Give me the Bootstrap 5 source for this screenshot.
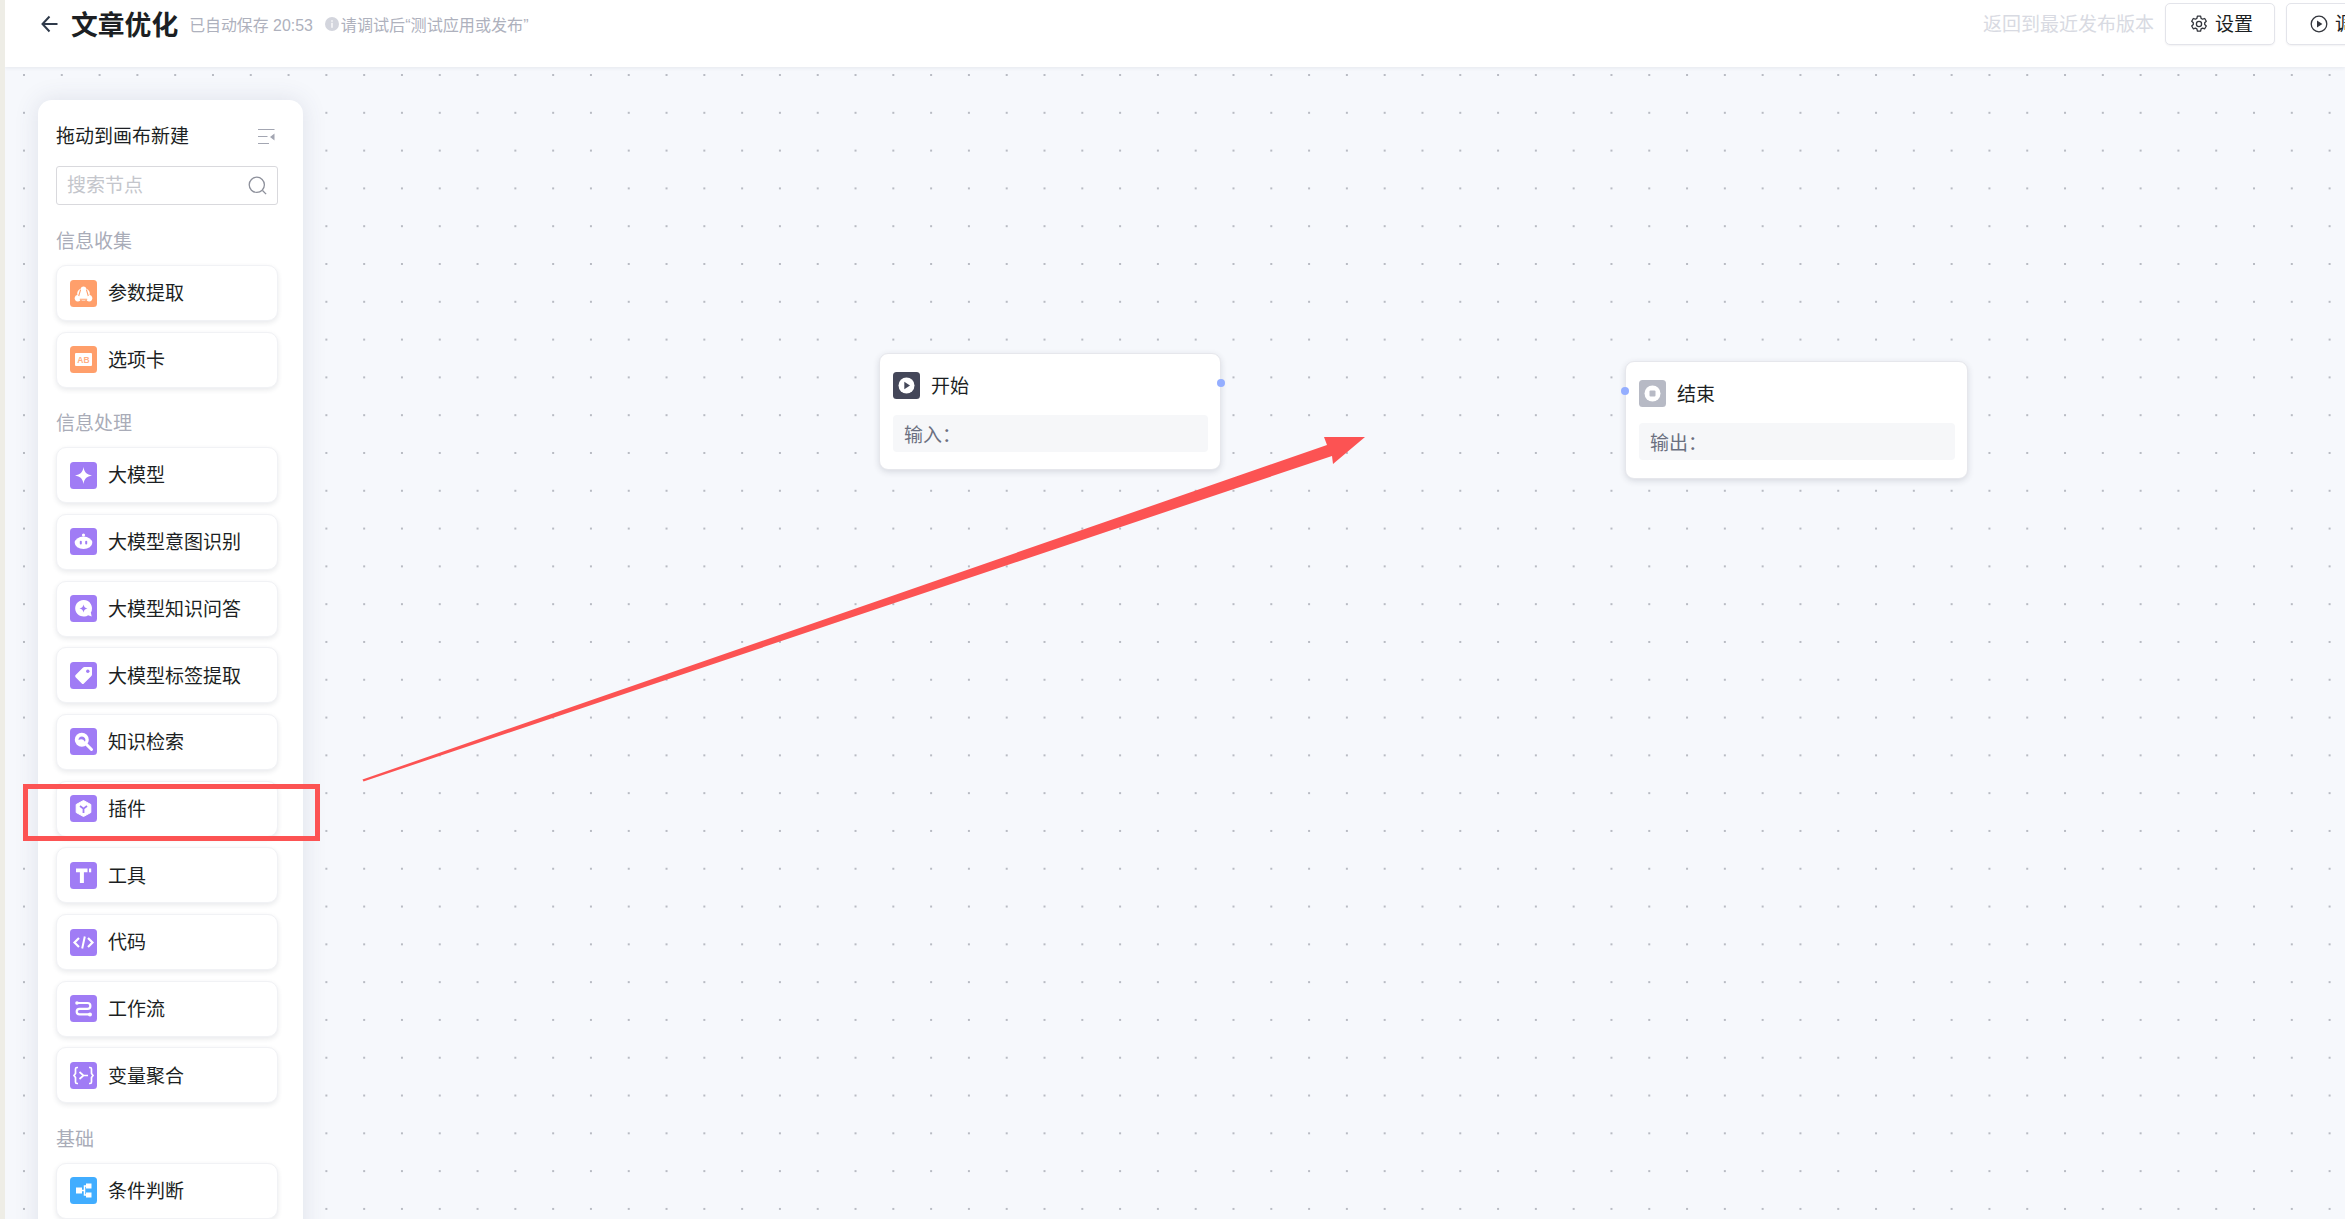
<!DOCTYPE html>
<html lang="zh-CN">
<head>
  <meta charset="UTF-8">
  <meta name="viewport" content="width=device-width, initial-scale=1.0">
  <title>文章优化</title>
  <link href="https://cdn.jsdelivr.net/npm/bootstrap@5.3.0/dist/css/bootstrap.min.css" rel="stylesheet">
  <style>
    html, body { height: 100%; }
    body {
      font-family: "Liberation Sans", "Noto Sans CJK SC", sans-serif;
      font-size: 19px;
      color: #1c1f23;
      overflow: hidden;
      background: #fff;
    }
    .app-shell { height: 1219px; border-left: 5px solid #eeede6; position: relative; overflow: hidden; }
    /* le texte CJK tombe un peu haut : on le recentre */
    .txt-drop { padding-top: 3px; }

    /* barre du haut */
    .top-bar { height: 67px; padding: 3px 0 22px 36px; background: #fff; box-shadow: 0 1px 4px rgba(30, 35, 60, .08); position: relative; z-index: 2; }
    .back-arrow { width: 17px; height: 18px; margin-right: 13px; }
    .page-title { font-size: 26.8px; font-weight: 700; line-height: 42px; margin: 0 11px 0 0; padding-top: 4px; color: #1c1f23; }
    .save-info { font-size: 15.9px; color: #aeb1bd; white-space: nowrap; }
    .test-hint { font-size: 16.1px; color: #aeb1bd; margin-left: 12px; white-space: nowrap; }
    .info-dot { width: 14px; height: 14px; margin-right: 2px; }
    .revert-link { color: #d8dae2; margin-right: 11px; white-space: nowrap; }
    .bar-btn { height: 42px; width: 110px; padding: 0 0 0 24px; font-size: 19px; color: #1c1f23; background: #fff; border: 1px solid #e3e4ea; border-radius: 5px; box-shadow: 0 1px 2px rgba(30, 35, 60, .06); }
    .bar-btn svg { width: 18px; height: 18px; margin-right: 7px; flex-shrink: 0; }
    .run-btn { width: 100px; margin-left: 11px; margin-right: -41px; padding-left: 23px; flex-shrink: 0; }

    /* canevas */
    .flow-canvas {
      height: 1152px;
      padding: 33px 0 0 33px;
      background-color: #f6f8fc;
      background-image: radial-gradient(circle, #b8bbc3 1.1px, transparent 1.3px);
      background-size: 37.8px 37.8px;
      background-position: .1px -10.9px;
      position: relative;
    }

    /* panneau latéral */
    .node-panel {
      width: 265px;
      height: 1200px;
      padding: 22px 25px 0 18px;
      background: #fff;
      border-radius: 14px 14px 0 0;
      box-shadow: 0 0 24px rgba(60, 70, 110, .13);
    }
    .panel-head { height: 28px; margin-bottom: 16px; color: #1c1f23; }
    .panel-toggle { width: 17px; height: 17px; margin-right: 3px; }
    .node-search { height: 39px; border: 1px solid #d9d9dd; border-radius: 3px; padding: 0 10px; margin-bottom: 22px; }
    .node-search input { border: 0; outline: 0; padding: 2px 0 0; width: 170px; font-size: 19px; color: #333; background: transparent; }
    .node-search input::placeholder { color: #c4c6cc; }
    .node-search svg { width: 19px; height: 19px; margin-right: 0; }
    .group-label { color: #a9acb8; height: 28px; line-height: 28px; margin-bottom: 10px; padding-top: 1px; }
    .palette-list { gap: 10.7px; margin-bottom: 21.5px; }
    .palette-item {
      height: 56px;
      padding-left: 13px;
      border: 1px solid #f1f2f5;
      border-radius: 10px;
      background: #fff;
      box-shadow: 0 2px 5px rgba(40, 45, 70, .1);
      color: #1c1f23;
    }
    .palette-item > svg { width: 27px; height: 27px; margin-right: 11px; flex-shrink: 0; }

    /* noeuds */
    .flow-node {
      position: absolute;
      width: 342px;
      height: 117px;
      padding: 18px 12px 0 13px;
      background: #fff;
      border: 1px solid #e6e7ec;
      border-radius: 9px;
      box-shadow: 0 2px 6px rgba(40, 45, 70, .15);
    }
    .node-start { left: 874px; top: 286px; }
    .node-end { left: 1620px; top: 294px; width: 343px; height: 118px; }
    .flow-node > .node-title svg { width: 27px; height: 27px; margin-right: 11px; }
    .node-title { height: 27px; margin-bottom: 16px; }
    .node-field { height: 37px; line-height: 41px; padding-left: 11px; background: #f6f7f9; border-radius: 4px; color: #6b7080; }
    .port-dot { position: absolute; width: 8px; height: 8px; border-radius: 50%; background: #94aeff; top: 25px; }
    .port-right { right: -5px; }
    .port-left { left: -5px; }

    /* annotation rouge */
    .mark-layer { position: absolute; left: -5px; top: 0; width: 2345px; height: 1219px; z-index: 5; pointer-events: none; }
  </style>
</head>
<body>
  <div class="app-shell">
    <!-- Barre du haut -->
    <header class="top-bar d-flex align-items-center">
      <svg class="back-arrow" viewBox="0 0 17 18" fill="none" stroke="#2f3a4a" stroke-width="2"><path d="M8.500 1.500 1.500 9l7 7.500M1.500 9H16.500"/></svg>
      <h1 class="page-title">文章优化</h1>
      <span class="save-info txt-drop">已自动保存 20:53</span>
      <span class="test-hint d-flex align-items-center">
        <svg class="info-dot" viewBox="0 0 13 13"><circle cx="6.500" cy="6.500" r="6.500" fill="#d3d5dd"/><rect x="5.900" y="5.400" width="1.200" height="4.600" fill="#fff"/><rect x="5.900" y="3" width="1.200" height="1.400" fill="#fff"/></svg><span class="txt-drop">请调试后“测试应用或发布”</span>
      </span>
      <span class="revert-link ms-auto txt-drop">返回到最近发布版本</span>
      <button type="button" class="btn bar-btn d-flex align-items-center flex-shrink-0">
        <svg viewBox="0 0 18 18" fill="none" stroke="#33363d" stroke-width="1.300"><path d="M7.400 1.200h3.200l.5 2.200 1.500.8 2.100-.7 1.600 2.800-1.600 1.500v1.700l1.600 1.500-1.600 2.800-2.100-.7-1.500.8-.5 2.200H7.400l-.5-2.200-1.500-.8-2.100.7-1.600-2.800 1.600-1.500V7.800L1.700 6.300l1.600-2.800 2.100.7 1.500-.8z" stroke-linejoin="round"/><circle cx="9" cy="9" r="2.600"/></svg><span class="txt-drop">设置</span>
      </button>
      <button type="button" class="btn bar-btn run-btn d-flex align-items-center">
        <svg viewBox="0 0 18 18"><circle cx="9" cy="9" r="7.800" fill="none" stroke="#33363d" stroke-width="1.300"/><path d="M7 5.500v7l5.400-3.500z" fill="#33363d"/></svg><span class="txt-drop">调试</span>
      </button>
    </header>

    <!-- Canevas -->
    <main class="flow-canvas">
      <aside class="node-panel">
        <div class="panel-head d-flex align-items-center justify-content-between">
          <span class="txt-drop">拖动到画布新建</span>
          <svg class="panel-toggle" viewBox="0 0 17 17" fill="none" stroke="#a3a6b2" stroke-width="1.200"><path d="M0 1.500h16.500M0 8.500h9.500M0 15.500h11"/><path d="M16.500 5.500v7L12 9z" fill="#a3a6b2" stroke="none"/></svg>
        </div>
        <div class="node-search d-flex align-items-center justify-content-between">
          <input type="text" placeholder="搜索节点">
          <svg viewBox="0 0 19 19" fill="none" stroke="#8d909b" stroke-width="1.300"><circle cx="8.800" cy="8.800" r="7.600"/><path d="m14.500 14.500 3.600 3.600"/></svg>
        </div>

        <div class="group-label">信息收集</div>
        <div class="palette-list d-flex flex-column">
          <div class="palette-item d-flex align-items-center">
            <svg viewBox="0 0 27 27"><rect width="27" height="27" rx="3.500" fill="#ff9f6b"/><path d="M13.500 6.500a3 3 0 0 1 2.900 2.300 5.200 5.200 0 0 1 3.200 6.300 3.200 3.200 0 1 1-3.300 4.600 5.400 5.400 0 0 1-5.600 0 3.200 3.200 0 1 1-3.300-4.600 5.200 5.200 0 0 1 3.200-6.300 3 3 0 0 1 2.900-2.300z" fill="#fff"/><path d="M10.600 9.700 8.700 16M16.400 9.700 18.300 16M9.800 19.300h7.400" stroke="#ff9f6b" stroke-width="1.100" fill="none"/></svg><span class="txt-drop">参数提取</span>
          </div>
          <div class="palette-item d-flex align-items-center">
            <svg viewBox="0 0 27 27"><rect width="27" height="27" rx="3.500" fill="#ff9f6b"/><rect x="5" y="7" width="17" height="13" rx="1" fill="#fff"/><text x="13.500" y="16.600" text-anchor="middle" font-family="Liberation Sans" font-weight="700" font-size="8.500" fill="#ffae82">AB</text></svg><span class="txt-drop">选项卡</span>
          </div>
        </div>

        <div class="group-label">信息处理</div>
        <div class="palette-list d-flex flex-column">
          <div class="palette-item d-flex align-items-center">
            <svg viewBox="0 0 27 27"><rect width="27" height="27" rx="3.500" fill="#a07cf5"/><path d="M13.500 5c.9 5.400 3.100 7.600 8.500 8.500-5.400.9-7.600 3.100-8.500 8.500-.9-5.400-3.100-7.600-8.500-8.500 5.400-.9 7.600-3.100 8.500-8.500z" fill="#fff"/></svg><span class="txt-drop">大模型</span>
          </div>
          <div class="palette-item d-flex align-items-center">
            <svg viewBox="0 0 27 27"><rect width="27" height="27" rx="3.500" fill="#a07cf5"/><ellipse cx="13.500" cy="14.800" rx="8.800" ry="6.200" fill="#fff"/><circle cx="13.500" cy="7" r="1.600" fill="#fff"/><rect x="9.800" y="12.800" width="2" height="3.600" rx="1" fill="#a07cf5"/><rect x="15.200" y="12.800" width="2" height="3.600" rx="1" fill="#a07cf5"/></svg><span class="txt-drop">大模型意图识别</span>
          </div>
          <div class="palette-item d-flex align-items-center">
            <svg viewBox="0 0 27 27"><rect width="27" height="27" rx="3.500" fill="#a07cf5"/><path d="M13.500 5a8.300 8.300 0 1 0 4.600 15.200l3.600 1.300-.9-3.900A8.300 8.300 0 0 0 13.500 5z" fill="#fff"/><path d="M13.500 9.500c.4 2.400 1.600 3.600 4 4-2.400.4-3.600 1.600-4 4-.4-2.400-1.600-3.600-4-4 2.400-.4 3.600-1.600 4-4z" fill="#a07cf5"/></svg><span class="txt-drop">大模型知识问答</span>
          </div>
          <div class="palette-item d-flex align-items-center">
            <svg viewBox="0 0 27 27"><rect width="27" height="27" rx="3.500" fill="#a07cf5"/><path d="M14.500 5H21a1 1 0 0 1 1 1v6.500a2 2 0 0 1-.6 1.400l-7.500 7.500a1.500 1.500 0 0 1-2.100 0l-6.200-6.200a1.500 1.500 0 0 1 0-2.100l7.500-7.500a2 2 0 0 1 1.400-.6z" fill="#fff"/><circle cx="17.800" cy="9.200" r="1.700" fill="#a07cf5"/></svg><span class="txt-drop">大模型标签提取</span>
          </div>
          <div class="palette-item d-flex align-items-center">
            <svg viewBox="0 0 27 27"><rect width="27" height="27" rx="3.500" fill="#a07cf5"/><circle cx="11.800" cy="11.800" r="7" fill="#fff"/><path d="M8.500 12a3.500 3.500 0 0 1 3.500-3.500 3.500 3.500 0 0 1 3 5.200 5 5 0 0 0-6.500-1.700z" fill="#a07cf5"/><path d="m16.500 16.500 5 5" stroke="#fff" stroke-width="3" stroke-linecap="round"/></svg><span class="txt-drop">知识检索</span>
          </div>
          <div class="palette-item d-flex align-items-center">
            <svg viewBox="0 0 27 27"><rect width="27" height="27" rx="3.500" fill="#a07cf5"/><path d="M13.500 5.500 20.800 9.500v8l-7.300 4-7.300-4v-8z" fill="#fff" stroke="#fff" stroke-linejoin="round"/><path d="m10 11 3.500 2.600L17 11M13.500 13.600V18" fill="none" stroke="#a07cf5" stroke-width="1.800"/></svg><span class="txt-drop">插件</span>
          </div>
          <div class="palette-item d-flex align-items-center">
            <svg viewBox="0 0 27 27"><rect width="27" height="27" rx="3.500" fill="#a07cf5"/><path d="M6 6.500h11.500v3.800h-3.600V21h-4V10.300H6z" fill="#fff"/><rect x="19" y="6.500" width="2.200" height="3.800" fill="#fff"/></svg><span class="txt-drop">工具</span>
          </div>
          <div class="palette-item d-flex align-items-center">
            <svg viewBox="0 0 27 27"><rect width="27" height="27" rx="3.500" fill="#a07cf5"/><path d="M9 9l-4.500 4.500L9 18M18 9l4.500 4.500L18 18" fill="none" stroke="#fff" stroke-width="2.200"/><path d="M14.800 7.500 12.200 19.500" stroke="#fff" stroke-width="2"/></svg><span class="txt-drop">代码</span>
          </div>
          <div class="palette-item d-flex align-items-center">
            <svg viewBox="0 0 27 27"><rect width="27" height="27" rx="3.500" fill="#a07cf5"/><path d="M7 8h10.500a2.900 2.900 0 0 1 0 5.800H9.500a2.800 2.800 0 0 0 0 5.600H20" fill="none" stroke="#fff" stroke-width="2.200"/><circle cx="7" cy="8" r="1.800" fill="#fff"/><circle cx="20" cy="19.400" r="2" fill="#fff"/></svg><span class="txt-drop">工作流</span>
          </div>
          <div class="palette-item d-flex align-items-center">
            <svg viewBox="0 0 27 27"><rect width="27" height="27" rx="3.500" fill="#a07cf5"/><path d="M8 5.500H7a1.500 1.500 0 0 0-1.500 1.500v4.500L4 13.500l1.500 2V20A1.500 1.500 0 0 0 7 21.500h1M19 5.500h1A1.500 1.500 0 0 1 21.500 7v4.500l1.500 2-1.500 2V20a1.500 1.500 0 0 1-1.500 1.500h-1" fill="none" stroke="#fff" stroke-width="1.700"/><path d="m9.500 10 4 3.500-4 3.500M13.500 13.500h4.500" fill="none" stroke="#fff" stroke-width="1.700"/></svg><span class="txt-drop">变量聚合</span>
          </div>
        </div>

        <div class="group-label">基础</div>
        <div class="palette-list d-flex flex-column">
          <div class="palette-item d-flex align-items-center">
            <svg viewBox="0 0 27 27"><rect width="27" height="27" rx="3.500" fill="#41adff"/><rect x="6" y="10.500" width="6" height="6" fill="#fff"/><rect x="16" y="6.500" width="5.500" height="5" fill="#fff"/><rect x="16" y="15.500" width="5.500" height="5" fill="#fff"/><path d="M12 13.500h2.500V9H16M14.500 13.500V18H16" fill="none" stroke="#fff" stroke-width="1.500"/></svg><span class="txt-drop">条件判断</span>
          </div>
        </div>
      </aside>

      <!-- Noeuds du diagramme -->
      <div class="flow-node node-start">
        <div class="node-title d-flex align-items-center">
          <svg viewBox="0 0 27 27"><rect width="27" height="27" rx="3.500" fill="#444759"/><circle cx="13.500" cy="13.500" r="8" fill="#fff"/><path d="M11.300 9.800v7.400l5.700-3.700z" fill="#444759"/></svg><span class="txt-drop">开始</span>
        </div>
        <div class="node-field">输入：</div>
        <span class="port-dot port-right"></span>
      </div>
      <div class="flow-node node-end">
        <div class="node-title d-flex align-items-center">
          <svg viewBox="0 0 27 27"><rect width="27" height="27" rx="3.500" fill="#b7bac5"/><circle cx="13.500" cy="13.500" r="8" fill="#fff"/><rect x="10.500" y="10.500" width="6" height="6" rx="1" fill="#b7bac5"/></svg><span class="txt-drop">结束</span>
        </div>
        <div class="node-field">输出：</div>
        <span class="port-dot port-left"></span>
      </div>
    </main>

    <!-- Annotation rouge par-dessus la capture -->
    <svg class="mark-layer" viewBox="0 0 2345 1219">
      <rect x="25.500" y="786.500" width="292" height="52" fill="none" stroke="#fc5353" stroke-width="5"/>
      <polygon points="362.500,779.500 1327,445 1324,437 1365,437 1333,464 1332,456 363.500,781.500" fill="#fc5353"/>
    </svg>
  </div>

  <script src="https://cdn.jsdelivr.net/npm/bootstrap@5.3.0/dist/js/bootstrap.bundle.min.js"></script>
</body>
</html>
